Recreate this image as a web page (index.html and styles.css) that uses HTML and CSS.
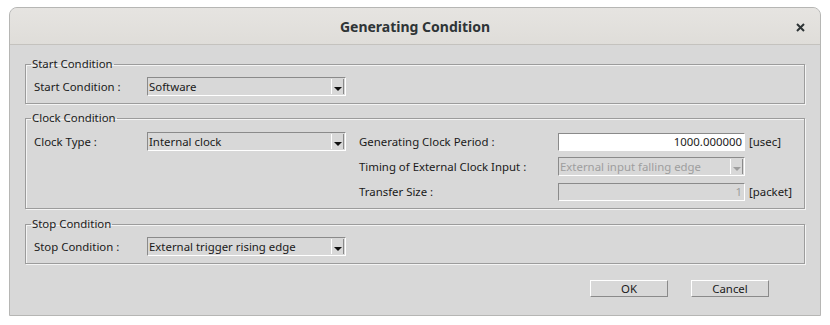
FILE: index.html
```html
<!DOCTYPE html>
<html lang="en">
<head>
    <meta charset="UTF-8">
    <title>Generating Condition</title>
    <link rel="stylesheet" href="styles.css">
</head>
<body>
    <div class="dialog">
        <div class="titlebar">
            <span class="title">Generating Condition</span>
            <svg class="close" width="9" height="9" viewBox="0 0 9 9">
                <path d="M1 1 L8 8 M8 1 L1 8" stroke="#2e3436" stroke-width="2"/>
            </svg>
        </div>
        <div class="content">
            <fieldset class="group">
                <legend>Start Condition</legend>
                <div class="row">
                    <span class="label">Start Condition :</span>
                    <div class="combo"><span class="value">Software</span><span class="arrow"></span></div>
                </div>
            </fieldset>

            <fieldset class="group clock-group">
                <legend>Clock Condition</legend>
                <div class="clock">
                    <div class="row">
                        <span class="label">Clock Type :</span>
                        <div class="combo"><span class="value">Internal clock</span><span class="arrow"></span></div>
                    </div>
                    <div class="clock-right">
                        <div class="row">
                            <span class="label wide">Generating Clock Period :</span>
                            <div class="field">1000.000000</div>
                            <span class="unit">[usec]</span>
                        </div>
                        <div class="row">
                            <span class="label wide">Timing of External Clock Input :</span>
                            <div class="combo disabled long"><span class="value">External input falling edge</span><span class="arrow"></span></div>
                        </div>
                        <div class="row">
                            <span class="label wide">Transfer Size :</span>
                            <div class="field disabled">1</div>
                            <span class="unit">[packet]</span>
                        </div>
                    </div>
                </div>
            </fieldset>

            <fieldset class="group stop-group">
                <legend>Stop Condition</legend>
                <div class="row">
                    <span class="label">Stop Condition :</span>
                    <div class="combo"><span class="value">External trigger rising edge</span><span class="arrow"></span></div>
                </div>
            </fieldset>

            <div class="buttons">
                <button>OK</button>
                <button>Cancel</button>
            </div>
        </div>
    </div>
</body>
</html>
```

FILE: styles.css
```css
body {
    margin: 0;
    background: #ffffff;
    font-family: "Noto Sans", "Open Sans", sans-serif;
    font-size: 11.4px;
    color: #1a1a1a;
}

.dialog {
    margin: 7px 0 0 9px;
    width: 810px;
    height: 307px;
    border: 1px solid #b6b6b4;
    border-radius: 8px 8px 0 0;
    background: #d8d8d8;
    overflow: hidden;
}

.titlebar {
    height: 36px;
    display: flex;
    align-items: center;
    justify-content: center;
    position: relative;
    background: linear-gradient(#e6e4e1, #dfddd9);
    border-bottom: 1px solid #c4c2be;
}

.title {
    font-weight: bold;
    font-size: 14px;
    color: #2e3436;
}

.close {
    position: absolute;
    right: 15px;
    top: 15px;
}

.content {
    padding: 11px 15px 0 15px;
    display: flex;
    flex-direction: column;
    gap: 6px;
}

.group {
    margin: 0;
    padding: 2px 8px 4px 8px;
    border: 1px solid #9c9c9c;
    box-shadow: 1px 1px 0 #f4f4f4, inset 1px 1px 0 #f4f4f4;
    min-width: 0;
}

.clock-group {
    padding-top: 3px;
}

.stop-group {
    margin-top: 1px;
}

.group legend {
    padding: 0 1px;
    margin-left: -3px;
    line-height: 16px;
}

.row {
    display: flex;
    align-items: center;
    height: 25px;
}

.label {
    width: 113px;
    flex: none;
}

.label.wide {
    width: 199px;
}

.clock {
    display: flex;
    gap: 13px;
    align-items: flex-start;
}

.clock-right {
    display: flex;
    flex-direction: column;
}

.combo {
    width: 199px;
    height: 19px;
    box-sizing: border-box;
    display: flex;
    align-items: center;
    justify-content: space-between;
    border: 1px solid;
    border-color: #8a8a8a #ffffff #ffffff #8a8a8a;
    padding-left: 1px;
}

.combo.long {
    width: 187px;
}

.combo .arrow {
    width: 13px;
    height: 15px;
    margin-right: 1px;
    box-sizing: border-box;
    border-left: 1px solid #ffffff;
    border-right: 1px solid #8a8a8a;
    position: relative;
}

.combo .arrow::after {
    content: "";
    position: absolute;
    left: 2px;
    top: 8px;
    border-left: 4px solid transparent;
    border-right: 4px solid transparent;
    border-top: 4px solid #111111;
}

.combo.disabled {
    color: #9e9e9e;
}

.combo.disabled .arrow::after {
    border-top-color: #9e9e9e;
}

.field {
    width: 187px;
    height: 18px;
    box-sizing: border-box;
    background: #ffffff;
    border: 1px solid;
    border-color: #8a8a8a #ffffff #ffffff #8a8a8a;
    text-align: right;
    padding-right: 2px;
    line-height: 16px;
}

.field.disabled {
    background: #d8d8d8;
    color: #9e9e9e;
}

.unit {
    margin-left: 4px;
}

.buttons {
    display: flex;
    justify-content: flex-end;
    gap: 23px;
    padding: 10px 36px 0 0;
}

.buttons button {
    width: 78px;
    height: 17px;
    padding: 0;
    font: inherit;
    color: #1a1a1a;
    background: #d8d8d8;
    border: 1px solid;
    border-color: #ffffff #8a8a8a #8a8a8a #ffffff;
    line-height: 14px;
}
```
